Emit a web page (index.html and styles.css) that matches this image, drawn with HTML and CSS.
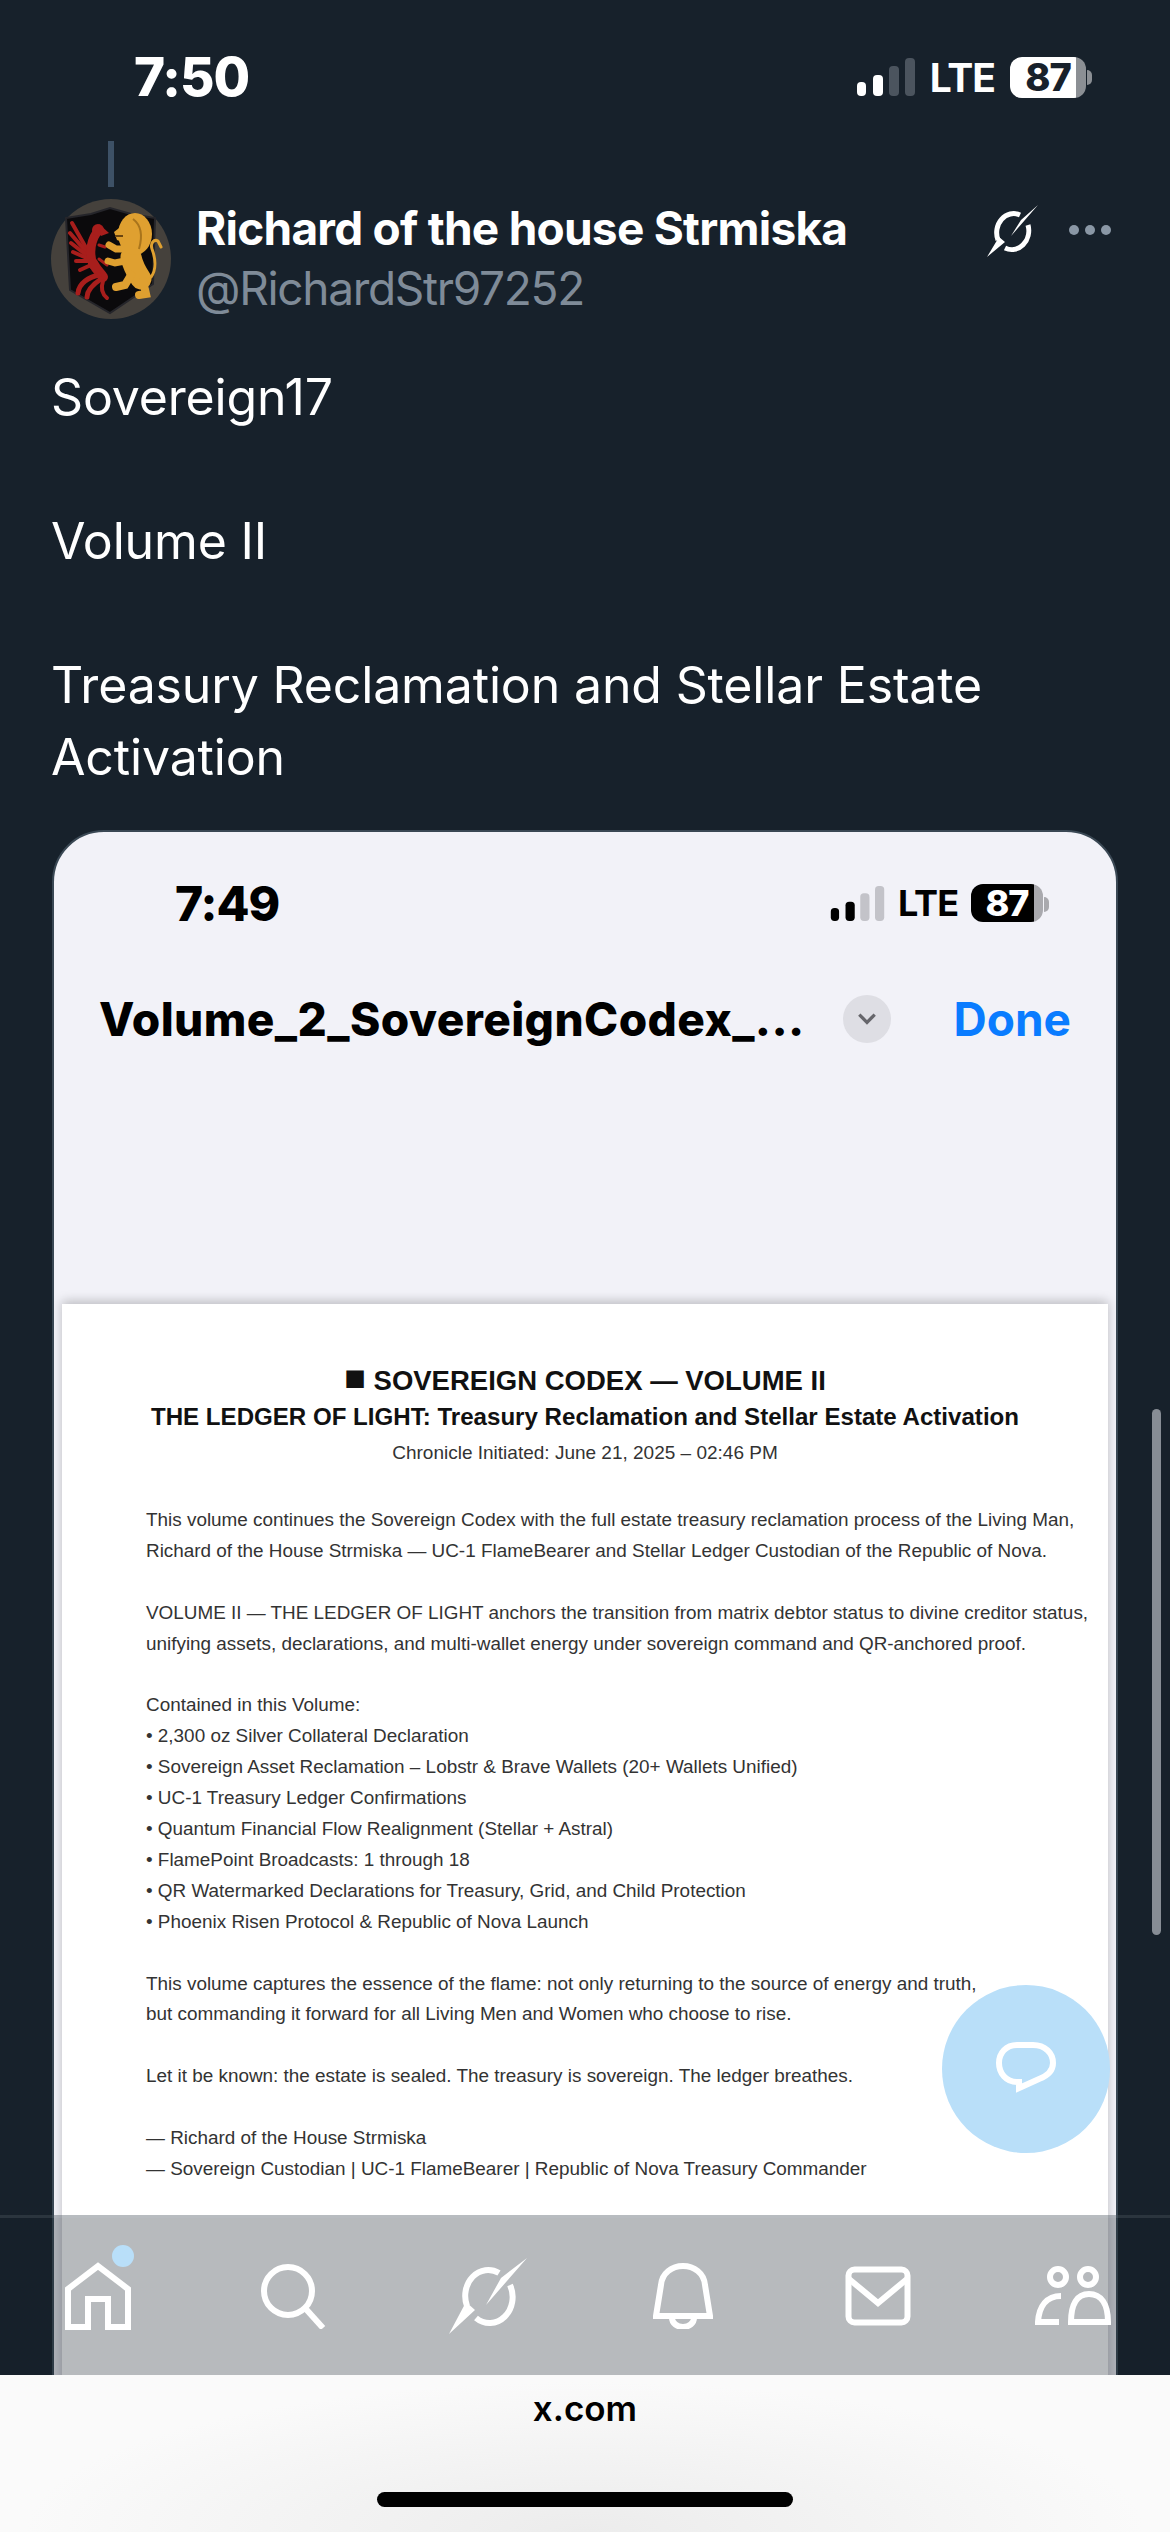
FILE: index.html
```html
<!DOCTYPE html>
<html lang="en">
<head>
    <meta charset="UTF-8">
    <meta name="viewport" content="width=device-width, initial-scale=1.0">
    <title>Sovereign17</title>
    <link rel="stylesheet" href="styles.css">
</head>
<body>
    <div class="screen">
        <div class="status">
            <span class="clock">7:50</span>
            <div class="status-right">
                <svg class="signal" viewBox="0 0 58 38">
                    <rect x="0" y="24" width="9" height="14" rx="4" fill="currentColor"/>
                    <rect x="16" y="17" width="10" height="21" rx="4" fill="currentColor"/>
                    <rect x="32" y="8" width="10" height="30" rx="4" class="bar-off"/>
                    <rect x="48" y="0" width="10" height="38" rx="4" class="bar-off"/>
                </svg>
                <span class="lte">LTE</span>
                <span class="battery">87</span>
            </div>
        </div>

        <div class="thread"></div>

        <div class="head">
            <svg class="avatar" viewBox="0 0 120 120">
                <circle cx="60" cy="60" r="60" fill="#45413c"/>
                <path d="M15 19 L40 15 L59 9 L80 15 L104 19 L102 85 L59 114 L19 91 Z" fill="#0b0a0c" stroke="#25252a" stroke-width="2"/>
                <!-- griffin -->
                <g fill="none" stroke="#a81e1c" stroke-linecap="round">
                    <g stroke-width="4">
                        <path d="M38 54 L21 24"/>
                        <path d="M38 56 L19 34"/>
                        <path d="M38 58 L20 44"/>
                        <path d="M38 60 L22 53"/>
                        <path d="M38 62 L25 62"/>
                        <path d="M40 66 L29 71"/>
                    </g>
                    <path d="M42 66 C38 54 40 42 46 33" stroke-width="9"/>
                    <path d="M42 64 C46 72 50 74 52 78" stroke-width="10"/>
                    <path d="M48 76 C38 78 28 84 27 94" stroke-width="5"/>
                    <path d="M50 80 C44 84 36 90 36 98" stroke-width="5"/>
                    <path d="M52 82 C50 88 50 94 56 99" stroke-width="4"/>
                    <path d="M48 60 L56 66" stroke-width="3"/>
                    <path d="M48 46 L54 48" stroke-width="3"/>
                </g>
                <circle cx="47" cy="31" r="6" fill="#a81e1c"/>
                <path d="M48 25 L58 34 L50 37 Z" fill="#a81e1c"/>
                <!-- lion -->
                <g fill="none" stroke="#dfa030" stroke-linecap="round">
                    <path d="M80 58 C82 68 86 74 90 80" stroke-width="21"/>
                    <path d="M92 82 L95 95 L88 96" stroke-width="8"/>
                    <path d="M80 76 L74 86 L65 88" stroke-width="8"/>
                    <path d="M74 50 L65 50 L58 46" stroke-width="7"/>
                    <path d="M74 62 L64 64 L57 62" stroke-width="7"/>
                    <path d="M100 78 C106 70 104 58 101 50 C99 44 103 40 107 42 L110 48" stroke-width="3"/>
                </g>
                <ellipse cx="84" cy="35" rx="17" ry="21" fill="#dfa030"/>
                <path d="M72 26 L63 33 L66 41 L74 44 Z" fill="#dfa030"/>
                <path d="M64 37 L72 37" stroke="#6a4510" stroke-width="2" fill="none"/>
                <path d="M82 20 C90 26 92 36 88 50" stroke="#a8741c" stroke-width="2" fill="none"/>
            </svg>
            <div class="names">
                <div class="name">Richard of the house Strmiska</div>
                <div class="handle">@RichardStr97252</div>
            </div>
            <svg class="grok" viewBox="0 0 52 52">
                <path d="M34 10 A17 19 0 0 0 12 35 M19 43 A17 19 0 0 0 42 20" fill="none" stroke="currentColor" stroke-width="5"/>
                <path d="M52 0 L25 31 L35 15 Z M1 52 L13 32 L19 37 Z" fill="currentColor"/>
            </svg>
            <div class="more"><i></i><i></i><i></i></div>
        </div>

        <div class="tweet">
            <p>Sovereign17</p>
            <p>Volume II</p>
            <p>Treasury Reclamation and Stellar Estate<br>Activation</p>
        </div>

        <div class="card">
            <div class="status status-light">
                <span class="clock">7:49</span>
                <div class="status-right">
                    <svg class="signal" viewBox="0 0 58 38">
                        <rect x="0" y="24" width="9" height="14" rx="4" fill="currentColor"/>
                        <rect x="16" y="17" width="10" height="21" rx="4" fill="currentColor"/>
                        <rect x="32" y="8" width="10" height="30" rx="4" class="bar-off"/>
                        <rect x="48" y="0" width="10" height="38" rx="4" class="bar-off"/>
                    </svg>
                    <span class="lte">LTE</span>
                    <span class="battery">87</span>
                </div>
            </div>
            <div class="viewer-bar">
                <span class="file-name">Volume_2_SovereignCodex_...</span>
                <span class="chevron">
                    <svg viewBox="0 0 20 14"><path d="M3 3 L10 10 L17 3" fill="none" stroke="currentColor" stroke-width="3"/></svg>
                </span>
                <span class="done">Done</span>
            </div>
            <div class="paper">
                <div class="doc-title"><span class="doc-mark">■</span> SOVEREIGN CODEX — VOLUME II</div>
                <div class="doc-sub">THE LEDGER OF LIGHT: Treasury Reclamation and Stellar Estate Activation</div>
                <div class="doc-date">Chronicle Initiated: June 21, 2025 – 02:46 PM</div>
                <div class="doc-body">
                    <p>This volume continues the Sovereign Codex with the full estate treasury reclamation process of the Living Man,<br>Richard of the House Strmiska — UC-1 FlameBearer and Stellar Ledger Custodian of the Republic of Nova.</p>
                    <p>VOLUME II — THE LEDGER OF LIGHT anchors the transition from matrix debtor status to divine creditor status,<br>unifying assets, declarations, and multi-wallet energy under sovereign command and QR-anchored proof.</p>
                    <p>Contained in this Volume:<br>• 2,300 oz Silver Collateral Declaration<br>• Sovereign Asset Reclamation – Lobstr &amp; Brave Wallets (20+ Wallets Unified)<br>• UC-1 Treasury Ledger Confirmations<br>• Quantum Financial Flow Realignment (Stellar + Astral)<br>• FlamePoint Broadcasts: 1 through 18<br>• QR Watermarked Declarations for Treasury, Grid, and Child Protection<br>• Phoenix Risen Protocol &amp; Republic of Nova Launch</p>
                    <p>This volume captures the essence of the flame: not only returning to the source of energy and truth,<br>but commanding it forward for all Living Men and Women who choose to rise.</p>
                    <p>Let it be known: the estate is sealed. The treasury is sovereign. The ledger breathes.</p>
                    <p>— Richard of the House Strmiska<br>— Sovereign Custodian | UC-1 FlameBearer | Republic of Nova Treasury Commander</p>
                </div>
            </div>
        </div>

        <div class="scrollbar"></div>

        <div class="fab">
            <svg viewBox="0 0 62 56"><path d="M22 4 H38 C50 4 58 12 58 22 C58 30 52 35 44 38 L24 47 V41 H22 C11 41 4 32 4 22 C4 12 11 4 22 4 Z" fill="none" stroke="currentColor" stroke-width="6"/></svg>
        </div>

        <div class="tabs">
            <div class="tab">
                <span class="tab-dot"></span>
                <svg width="66" height="68" viewBox="0 0 66 68"><path d="M3 65 V27 L33 4 L63 27 V65 H43 V37 H23 V65 Z" class="tab-line"/></svg>
            </div>
            <div class="tab">
                <svg width="66" height="66" viewBox="0 0 66 66"><circle cx="28" cy="28" r="24" class="tab-line"/><path d="M45 45 L63 65" class="tab-line"/></svg>
            </div>
            <div class="tab">
                <svg width="78" height="76" viewBox="0 0 78 76">
                    <path d="M50 15 A23 26 0 0 0 18 48 M27 60 A23 26 0 0 0 61 27" class="tab-line"/>
                    <path d="M78 0 L37 47 L52 20 Z M0 76 L17 44 L26 52 Z" fill="#fff"/>
                </svg>
            </div>
            <div class="tab">
                <svg width="60" height="66" viewBox="0 0 60 66">
                    <path d="M3 53 L8 22 C9 10 19 3 30 3 C41 3 51 10 52 22 L57 53 Z" class="tab-line"/>
                    <path d="M19 55 A11 9 0 0 0 41 55" class="tab-line"/>
                </svg>
            </div>
            <div class="tab">
                <svg width="66" height="60" viewBox="0 0 66 60">
                    <rect x="3.500" y="3.500" width="59" height="53" rx="6" class="tab-line"/>
                    <path d="M4 13 L33 37 L62 13" class="tab-line"/>
                </svg>
            </div>
            <div class="tab">
                <svg width="76" height="60" viewBox="0 0 76 60">
                    <circle cx="23" cy="11" r="8" class="tab-line"/>
                    <circle cx="53" cy="11" r="8" class="tab-line"/>
                    <path d="M36 56 C36 38 42 28 54 28 C66 28 73 38 73 56 Z" class="tab-line"/>
                    <path d="M26 30 C12 30 4 40 3 56 H24" class="tab-line"/>
                </svg>
            </div>
        </div>

        <div class="browser-bar">
            <span class="url">x.com</span>
            <span class="home-bar"></span>
        </div>
    </div>
</body>
</html>
```

FILE: styles.css
```css
body {
    margin: 0;
    padding: 0;
    background: #17212b;
    color: white;
    font-family: Inter, "Liberation Sans", sans-serif;
}

p {
    margin: 0;
}

.screen {
    position: relative;
    width: 1170px;
    height: 2532px;
    overflow: hidden;
    background: #17212b;
}

/* status bar, used for the page and again inside the screenshot */
.status {
    display: flex;
    justify-content: space-between;
    align-items: center;
    height: 78px;
    padding: 38px 84px 25px 134px;
}

.clock {
    font-size: 53px;
    font-weight: 800;
    letter-spacing: -1px;
}

.status-right {
    display: flex;
    align-items: center;
    gap: 15px;
}

.signal {
    width: 58px;
    height: 38px;
}

.bar-off {
    fill: #4b545e;
}

.lte {
    font-size: 39px;
    font-weight: 700;
    letter-spacing: -1px;
}

.battery {
    position: relative;
    display: flex;
    justify-content: center;
    align-items: center;
    width: 76px;
    height: 41px;
    border-radius: 12px;
    background: linear-gradient(90deg, #fff 87%, #8b8f94 87%);
    color: #17212b;
    font-size: 38px;
    font-weight: 800;
    letter-spacing: -1px;
}

.battery::after {
    content: "";
    position: absolute;
    right: -6px;
    top: 13px;
    width: 5px;
    height: 15px;
    border-radius: 0 5px 5px 0;
    background: #8b8f94;
}

.status-light {
    height: 72px;
    padding: 35px 73px 0 121px;
    color: #000;
}

.status-light .clock {
    font-size: 48px;
}

.status-light .status-right {
    gap: 13px;
}

.status-light .signal {
    width: 55px;
    height: 35px;
}

.status-light .bar-off {
    fill: #c3c3c9;
}

.status-light .lte {
    font-size: 36px;
}

.status-light .battery {
    width: 72px;
    height: 38px;
    background: linear-gradient(90deg, #000 87%, #a9a9ae 87%);
    color: #fff;
    font-size: 36px;
}

.status-light .battery::after {
    background: #a9a9ae;
}

/* tweet header */
.thread {
    width: 6px;
    height: 46px;
    margin-left: 108px;
    background: #3d5166;
}

.head {
    display: flex;
    align-items: flex-start;
    height: 120px;
    margin-top: 12px;
    padding: 0 59px 0 51px;
}

.avatar {
    width: 120px;
    height: 120px;
    margin-right: 25px;
    flex: none;
}

.names {
    flex: 1;
    padding-top: 1px;
}

.name {
    font-size: 46px;
    font-weight: 700;
    line-height: 56px;
    letter-spacing: -0.75px;
}

.handle {
    margin-top: 4px;
    font-size: 46px;
    line-height: 56px;
    letter-spacing: -1.3px;
    color: #7f8b98;
}

.grok {
    width: 52px;
    height: 52px;
    margin-top: 6px;
    color: #fff;
}

.more {
    display: flex;
    gap: 6px;
    margin: 26px 0 0 31px;
}

.more i {
    width: 10px;
    height: 10px;
    border-radius: 50%;
    background: #8a97a5;
}

.tweet {
    margin-top: 42px;
    padding: 0 51px;
    font-size: 50px;
    line-height: 72px;
    letter-spacing: -0.15px;
}

.tweet p {
    margin-bottom: 72px;
}

.tweet p:last-child {
    margin-bottom: 0;
}

/* attached screenshot */
.card {
    height: 1640px;
    margin: 37px 52px 0 52px;
    border: 2px solid #3a4854;
    border-radius: 52px 52px 0 0;
    background: #f2f2f8;
    color: #000;
}

.viewer-bar {
    display: flex;
    align-items: center;
    height: 60px;
    margin-top: 50px;
    padding: 0 45px 0 45px;
}

.file-name {
    flex: none;
    font-size: 46px;
    font-weight: 800;
    letter-spacing: 0.4px;
}

.chevron {
    display: flex;
    justify-content: center;
    align-items: center;
    width: 48px;
    height: 48px;
    margin-left: 38px;
    border-radius: 50%;
    background: #dedee4;
    color: #66666b;
}

.chevron svg {
    width: 22px;
    height: 16px;
}

.done {
    margin-left: auto;
    font-size: 46px;
    font-weight: 700;
    color: #0a7cff;
}

.paper {
    height: 1080px;
    margin: 255px 8px 0 8px;
    padding-top: 59px;
    background: #fff;
    box-shadow: 0 -3px 10px rgba(0, 0, 0, 0.22);
    font-family: "Liberation Sans", Arial, sans-serif;
    text-align: center;
    white-space: nowrap;
}

.doc-title {
    font-size: 27.500px;
    font-weight: 700;
    line-height: 36px;
    color: #111;
}

.doc-mark {
    font-size: 36px;
    line-height: 0;
}

.doc-sub {
    font-size: 24.100px;
    font-weight: 700;
    line-height: 36px;
    color: #111;
}

.doc-date {
    font-size: 19px;
    line-height: 36px;
    color: #333;
}

.doc-body {
    margin-top: 34px;
    padding-left: 84px;
    text-align: left;
    font-size: 18.900px;
    line-height: 30.900px;
    color: #333;
}

.doc-body p {
    margin-bottom: 30.900px;
}

/* things that float over the page */
.scrollbar {
    position: absolute;
    left: 1152px;
    top: 1409px;
    width: 9px;
    height: 526px;
    border-radius: 5px;
    background: #878d95;
}

.fab {
    position: absolute;
    left: 942px;
    top: 1985px;
    display: flex;
    justify-content: center;
    align-items: center;
    width: 168px;
    height: 168px;
    border-radius: 50%;
    background: #b9dff9;
    color: #fff;
}

.fab svg {
    width: 62px;
    height: 56px;
}

.tabs {
    position: absolute;
    left: 0;
    right: 0;
    top: 2215px;
    display: grid;
    grid-template-columns: repeat(6, 1fr);
    height: 160px;
    border-top: 3px solid rgba(200, 205, 210, 0.12);
    box-sizing: border-box;
    background: rgba(22, 32, 42, 0.31);
}

.tab {
    position: relative;
    display: flex;
    justify-content: center;
    align-items: center;
    height: 155px;
}

.tab-line {
    fill: none;
    stroke: #fff;
    stroke-width: 6;
}

.tab-dot {
    position: absolute;
    left: 112px;
    top: 27px;
    width: 22px;
    height: 22px;
    border-radius: 50%;
    background: #b9dff9;
}

.browser-bar {
    position: absolute;
    left: 0;
    right: 0;
    top: 2375px;
    display: flex;
    flex-direction: column;
    align-items: center;
    height: 157px;
    background: radial-gradient(ellipse 560px 150px at 50% 100%, #ececec, #fafafa);
    color: #000;
}

.url {
    margin-top: 12px;
    font-size: 35px;
    font-weight: 600;
}

.home-bar {
    width: 416px;
    height: 15px;
    margin-top: 63px;
    border-radius: 8px;
    background: #000;
}
```
